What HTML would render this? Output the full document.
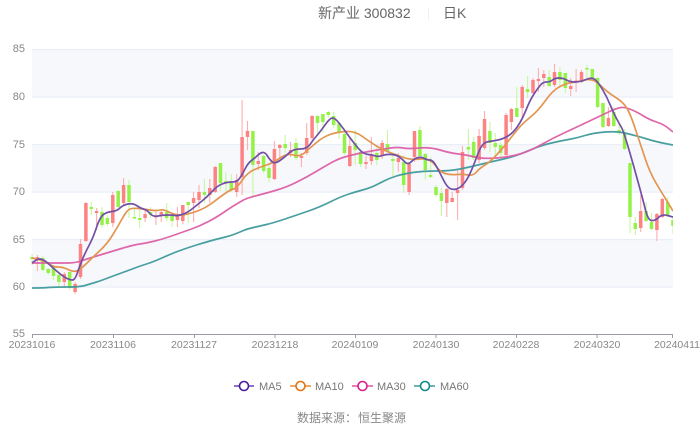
<!DOCTYPE html>
<html lang="zh"><head><meta charset="utf-8"><title>新产业 300832 日K</title>
<style>html,body{margin:0;padding:0;background:#fff}svg{display:block;filter:blur(.35px)}text{font-family:"Liberation Sans","Noto Sans CJK SC",sans-serif}</style>
</head><body>
<svg width="700" height="426" viewBox="0 0 700 426" xmlns="http://www.w3.org/2000/svg">
<defs><clipPath id="c"><rect x="30" y="40" width="643" height="300"/></clipPath></defs>
<rect width="700" height="426" fill="#fff"/>
<text x="318" y="18" font-size="14" fill="#666">新产业 300832</text>
<rect x="428" y="8" width="1" height="12" fill="#f0f0f0"/>
<text x="443" y="18" font-size="14" fill="#666">日K</text>
<g fill="#f6f8fc"><rect x="32" y="49.5" width="641" height="47.5"/><rect x="32" y="144.5" width="641" height="47.5"/><rect x="32" y="239.5" width="641" height="47.5"/></g>
<g fill="#e9eef7"><rect x="32" y="49" width="641" height="1.2"/><rect x="32" y="96.5" width="641" height="1.2"/><rect x="32" y="144" width="641" height="1.2"/><rect x="32" y="191.5" width="641" height="1.2"/><rect x="32" y="239" width="641" height="1.2"/><rect x="32" y="286.5" width="641" height="1.2"/></g>
<g font-size="11" fill="#888" text-anchor="end"><text x="25" y="52">85</text><text x="25" y="100">80</text><text x="25" y="148">75</text><text x="25" y="195">70</text><text x="25" y="243">65</text><text x="25" y="290">60</text><text x="25" y="337">55</text></g>
<path d="M32 334.5H673M32.5 334V338M113.5 334V338M194.5 334V338M275 334V338M355.5 334V338M436 334V338M516.500 334V338M597 334V338M672.500 334V338" stroke="#9c9ca8" fill="none"/>
<g font-size="10.500" fill="#888" text-anchor="middle"><text x="32" y="348">20231016</text><text x="113" y="348">20231106</text><text x="194" y="348">20231127</text><text x="275" y="348">20231218</text><text x="355" y="348">20240109</text><text x="436" y="348">20240130</text><text x="516" y="348">20240228</text><text x="597" y="348">20240320</text><text x="677" y="348" text-anchor="end" dx="23">20240411</text></g>
<g clip-path="url(#c)" fill="none">
<path stroke="#ffaeae" stroke-width="1.100" d="M37.4 255V271M64.3 272V287M75.1 282V294M80.5 239V279M85.9 202V242M96.6 208V230M112.8 192V227M123.6 178V205M145.100 210V222M155.9 210V225M161.3 211V222M177.4 207V227M182.8 205V224M193.6 192V222M199 185V208M209.8 179V203M215.2 166V193M236.700 174V197M242.100 100V195M247.5 121V150M258.3 152V170M274.4 141V180M279.800 144V158M290.6 142V157M301.4 153V167M306.700 123V155M312.100 115V140M349.8 138V167M366 156V169M371.4 137V165M382.2 140V159M398.3 153V172M409.100 164V195M414.5 131V162M446.8 188V217M452.2 192V202M457.6 170V220M462.5 146V190M479.100 129V163M484.5 111V150M506.100 113V157M511.4 108V130M522.2 85V117M533 78V94M538.4 68V92M543.8 70V87M554.5 64V87M570.700 78V96M576.100 69V92M581.5 70V83M608.4 107V127M640.700 195V232M656.9 213V241M662.3 198V218"/>
<path stroke="#fd8383" stroke-width="3.5" d="M37.4 257V260M64.3 274V282M75.1 284V292M80.5 244V277M85.9 203V241M96.6 211V213M112.8 195V223M123.6 185V203M145.100 214V218M155.9 216V217.500M161.3 212V215M177.4 216V220M182.8 205V221M193.6 198V203M199 192V200M209.8 188V195M215.2 167V192M236.700 180V192M242.100 137V177M247.5 131V137M258.3 161V164M274.4 149V179M279.800 145V148M290.6 150V153M301.4 156V158M306.700 138V153M312.100 116V138M349.8 146V166M366 162V164M371.4 155V161M382.2 143V155M398.3 158V162M409.100 164V192M414.5 131V157M446.8 189V203M452.2 198V202M457.6 190V193M462.5 152V188M479.100 136V160M484.5 119V148M506.100 115V155M511.4 109V122M522.2 87V108M533 80V93M538.4 79V81M543.8 74V78M554.5 72V85M570.700 86V89M576.100 80.500V82M581.5 72V82M608.4 118V126M640.700 211V228M656.9 214V230M662.3 199V217"/>
<path stroke="#c5f8a0" stroke-width="1.100" d="M32 254V265M42.800 256V271M48.200 268V275M53.500 265V280M58.900 272V286M69.700 272V290M91.300 202V215M102 207V228M107.400 215V226M118.200 190V208M129 180V218M134.400 208V219M139.700 210V228M150.500 207V218M166.700 203V221M172.100 213V227M188.200 202V223M204.400 179V203M220.500 163V191M225.900 172V192M231.300 174V192M252.900 131V198M263.600 155V173M269 165V182M285.200 135V153M296 138V160M317.500 115V135M322.900 114V133M328.300 111V118M333.700 112V128M339.100 122V139M344.500 133V155M355.200 130V165M360.600 149V167M376.800 145V165M387.500 130V153M392.900 155V176M403.700 155V193M419.900 126V158M425.300 153V180M430.600 157V178M436 185V197M441.400 188V216M468.400 129V160M473.700 137V160M489.900 122V152M495.300 133V155M500.700 142V157M516.800 87V117M527.600 76V98M549.200 70V87M559.900 67V87M565.300 73V93M586.900 65V78M592.300 69V80M597.600 77V108M603 103V128M613.800 107V127M619.200 123V135M624.600 129V150M630 163V233M635.300 217V235M646.100 202V222M651.500 213V230M667.700 197V217M673 217V234"/>
<path stroke="#92f246" stroke-width="3.500" d="M32 257V259M42.800 258V270M48.200 269V273M53.500 266V276M58.900 275V282M69.700 272V288M91.300 207V209M102 212V225M107.400 218V224M118.200 191V207M129 185V202M134.400 217V218.500M139.700 218V220M150.500 212V215M166.700 212V218M172.100 216V221M188.200 202V205M204.400 192V195M220.500 163V183M225.900 181V183M231.300 183V190M252.900 131V165M263.600 156V171M269 168V178M285.200 144V148M296 143V158M317.500 116V123M322.900 114V122M328.300 112V115M333.700 116V125M339.100 123V132M344.500 134V153M355.200 143V150M360.600 152V164M376.800 153V160M387.500 144V152M392.900 159V161M403.700 162V185M419.900 130V156M425.300 154V170M430.600 175V177M436 187V195M441.400 193V201M468.400 147V149.500M473.700 142V158M489.900 131V143M495.300 143V147M500.700 145V153M516.800 108V117M527.600 89V92M549.200 77V86M559.900 72V80M565.300 73V88M586.900 68V69.500M592.300 69V78M597.600 78V107M603 103V127M613.800 112V126M619.200 130V133M624.600 133V149M630 163V217M635.300 223V229M646.100 211V221M651.500 222V229M667.700 202V215M673 220V226"/>
<polyline stroke="#3f9a9b" stroke-width="1.700" opacity=".95" stroke-linejoin="round" points="32,288 43,288 53,287 80,287 90,284 100,281 113,276 127,271 140,266 153,262 173,253 190,247 203,243 217,239 230,236 240,232 247,229 260,226 273,223 297,215 320,207 340,197 355,192 370,188 380,183 390,178 403,174 423,171 450,171 470,167 490,162 513,157 530,150 543,145 560,141 577,138 593,133 617,131 637,136 657,142 673,145"/>
<polyline stroke="#dc5fa6" stroke-width="1.700" opacity=".95" stroke-linejoin="round" points="32,263 43,263 63,263 75,263 90,258 110,252 133,245 147,243 163,239 183,232 200,226 217,217 230,208 240,202 247,198 267,193 287,187 307,177 327,165 340,158 360,153 383,149 398,147 408,149 430,147 450,153 467,155 483,159 510,157 530,151 553,138 577,127 600,116 617,108 625,107 637,112 650,120 663,124 673,132"/>
<polyline stroke="#e39550" stroke-width="1.700" stroke-linejoin="round" points="32,258 43,260 53,267 63,267 73,272 80,270 93,257 107,244 117,228 127,210 133,208 143,209 157,211 163,209 177,216 193,213 207,207 220,197 230,190 237,188 247,173 260,167 273,163 287,153 300,157 310,148 323,137 337,132 355,131 370,142 383,150 397,155 410,160 430,158 440,172 450,175 463,174 473,176 480,168 490,162 503,148 513,135 523,123 538,111 553,90 567,83 577,82 593,78 607,92 623,102 630,113 640,143 650,173 662,193 673,211"/>
<polyline stroke="#7350a6" stroke-width="1.700" stroke-linejoin="round" points="32,263 37,259 42,259 48,263 53,268 59,273 64,277 70,280 75,280 80,265 86,251 93,238 100,217 107,212 117,211 123,205 133,203 140,208 147,210 153,217 163,215 173,215 177,216 187,213 197,205 207,197 217,186 227,182 237,182 242,175 248,163 255,158 260,153 265,152 270,160 275,164 285,157 293,149 307,149 313,140 320,132 330,118 335,118 343,128 353,142 363,154 373,155 378,157 387,154 397,155 403,160 408,165 415,158 422,157 427,160 433,160 440,173 447,187 453,190 460,188 467,180 473,167 480,148 485,142 493,141 503,139 513,133 522,120 530,100 538,88 543,82 550,82 555,78 563,78 570,82 580,82 592,77 598,82 607,97 613,112 620,125 623,130 630,153 637,178 643,200 648,220 655,221 662,214 673,217"/>
</g>
<g fill="#fff" stroke-width="1.600">
<path d="M234 386H254" stroke="#6a45ad"/><circle cx="244" cy="386" r="4.500" stroke="#4a1a9c"/>
<path d="M290 386H311" stroke="#ea8c3c"/><circle cx="300.500" cy="386" r="4.500" stroke="#e57212"/>
<path d="M352 386H373" stroke="#e0569f"/><circle cx="362.500" cy="386" r="4.500" stroke="#d91f8c"/>
<path d="M414 386H435" stroke="#3f9a9b"/><circle cx="425" cy="386" r="4.500" stroke="#0f8a8a"/>
</g>
<g font-size="11" fill="#777"><text x="259" y="390">MA5</text><text x="315" y="390">MA10</text><text x="377" y="390">MA30</text><text x="440" y="390">MA60</text></g>
<text x="297" y="422" font-size="12" fill="#888">数据来源：</text><text x="358" y="422" font-size="12" fill="#888">恒生聚源</text>
</svg>
<script>
document.querySelectorAll('polyline').forEach(function(l){
var p=l.getAttribute('points').trim().split(/\s+/).map(function(s){return s.split(',').map(Number)});
var d='M'+p[0][0]+' '+p[0][1];
for(var i=1;i<p.length-1;i++){d+='Q'+p[i][0]+' '+p[i][1]+' '+(p[i][0]+p[i+1][0])/2+' '+(p[i][1]+p[i+1][1])/2}
var e=p[p.length-1];d+='L'+e[0]+' '+e[1];
var n=document.createElementNS('http://www.w3.org/2000/svg','path');
n.setAttribute('d',d);
['stroke','stroke-width','opacity','stroke-linejoin'].forEach(function(a){if(l.hasAttribute(a))n.setAttribute(a,l.getAttribute(a))});
l.parentNode.replaceChild(n,l);
});
</script>
</body></html>
